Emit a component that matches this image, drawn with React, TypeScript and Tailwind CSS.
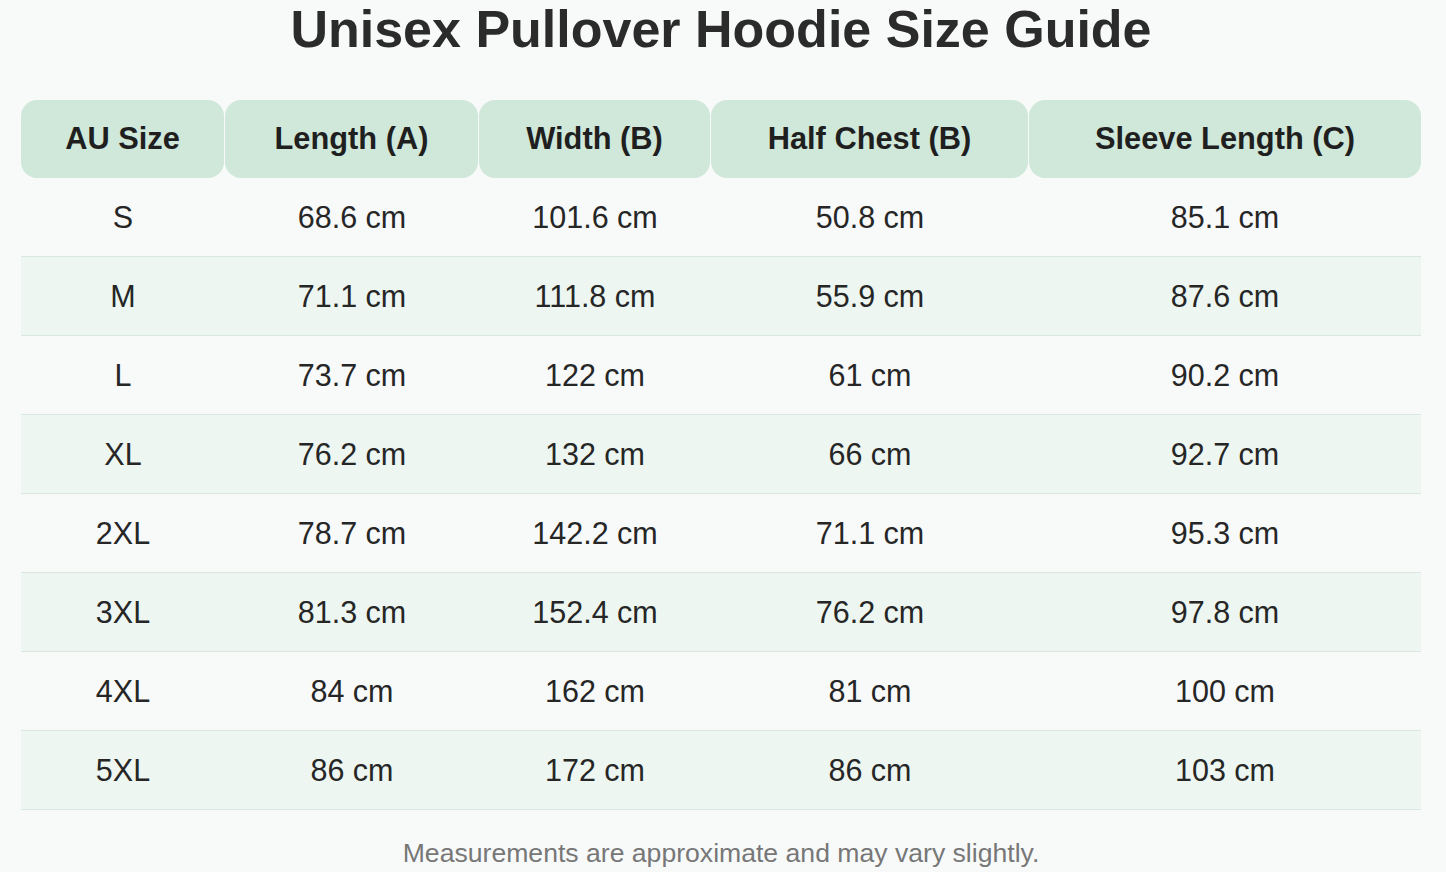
const headers = ["AU Size", "Length (A)", "Width (B)", "Half Chest (B)", "Sleeve Length (C)"];

const rows = [
  ["S", "68.6 cm", "101.6 cm", "50.8 cm", "85.1 cm"],
  ["M", "71.1 cm", "111.8 cm", "55.9 cm", "87.6 cm"],
  ["L", "73.7 cm", "122 cm", "61 cm", "90.2 cm"],
  ["XL", "76.2 cm", "132 cm", "66 cm", "92.7 cm"],
  ["2XL", "78.7 cm", "142.2 cm", "71.1 cm", "95.3 cm"],
  ["3XL", "81.3 cm", "152.4 cm", "76.2 cm", "97.8 cm"],
  ["4XL", "84 cm", "162 cm", "81 cm", "100 cm"],
  ["5XL", "86 cm", "172 cm", "86 cm", "103 cm"],
];

export default function App() {
  return (
    <div className="min-h-[872px] bg-[#f8fafa] font-['Liberation_Sans',Arial,sans-serif] text-[#222]">
      <div className="ml-[21px] w-[1400px]">
        <h1 className="text-center text-[52px] leading-[58px] font-bold text-[#2b2b2b]">
          Unisex Pullover Hoodie Size Guide
        </h1>

        <div className="mt-[42px] grid grid-cols-[204px_254px_232px_318px_392px]">
          {headers.map((h, i) => (
            <div
              key={h}
              className={
                "h-[78px] flex items-center justify-center rounded-2xl bg-[#d0e8da] text-[30.8px] leading-[34px] font-bold text-[#1f1f1f] " +
                (i < headers.length - 1 ? "mr-px" : "")
              }
            >
              {h}
            </div>
          ))}

          {rows.map((row, r) =>
            row.map((cell, c) => (
              <div
                key={r + "-" + c}
                className={
                  "h-[79px] flex items-center justify-center border-b border-[#d8e8de] text-[30.5px] leading-[34px] text-[#262626] " +
                  (r % 2 === 1 ? "bg-[#edf6f1]" : "")
                }
              >
                {cell}
              </div>
            ))
          )}
        </div>

        <p className="mt-[28px] text-center text-[26.6px] leading-[30px] text-[#777]">
          Measurements are approximate and may vary slightly.
        </p>
      </div>
    </div>
  );
}
